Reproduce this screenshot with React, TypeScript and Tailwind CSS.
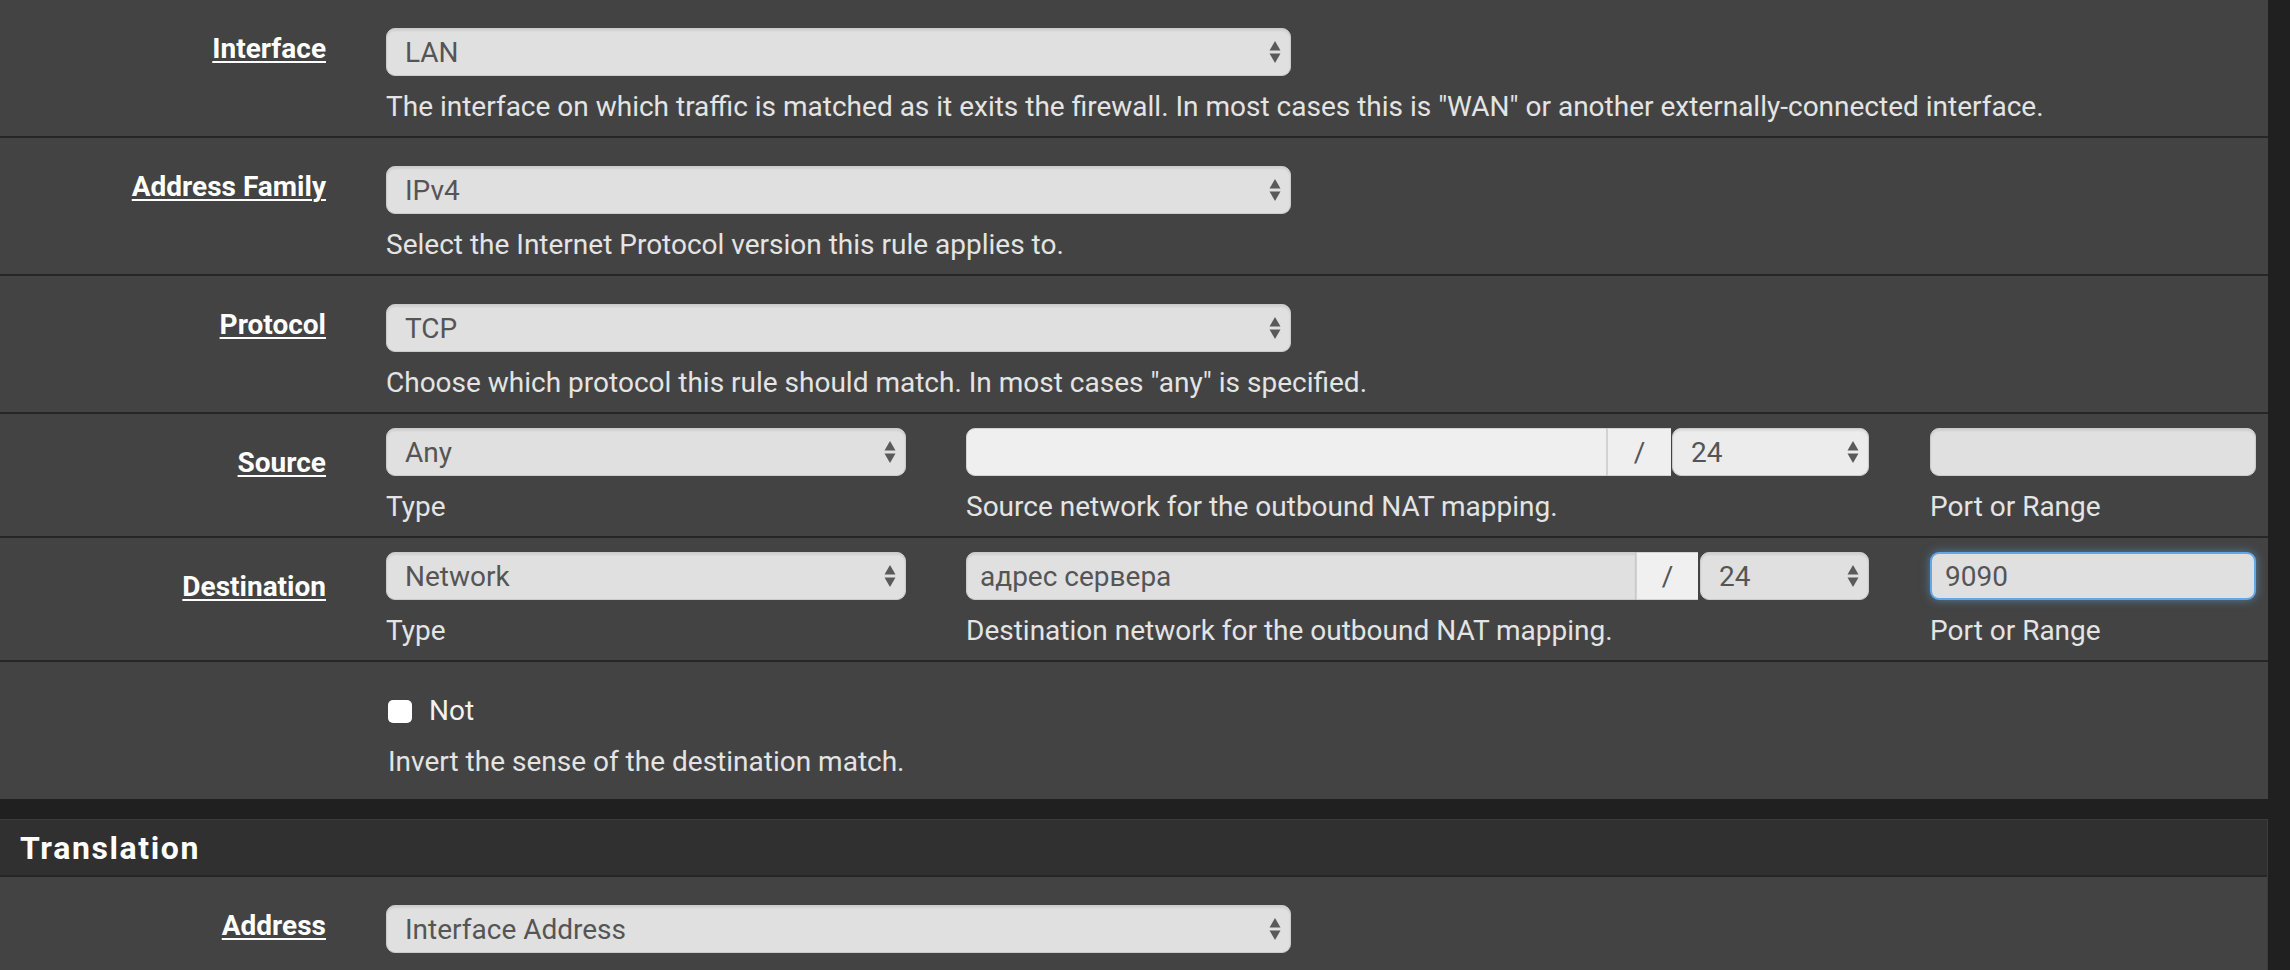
import React from "react";

function Arrows() {
  return (
    <svg width="12" height="24" viewBox="0 0 12 24" className="shrink-0">
      <path d="M6 1 L11.5 10.5 L0.5 10.5 Z" fill="#5a5a5a" />
      <path d="M0.5 13.5 L11.5 13.5 L6 23 Z" fill="#5a5a5a" />
    </svg>
  );
}

function Select({ value, className = "" }: { value: string; className?: string }) {
  return (
    <div
      className={`flex h-[48px] items-center justify-between rounded-[9px] border border-[#cbcbcb] pl-[18px] pr-[9px] text-[#555] shadow-[inset_0_2px_2px_rgba(0,0,0,0.07)] ${className}`}
    >
      <span className="pt-[2px]">{value}</span>
      <Arrows />
    </div>
  );
}

function Help({ children, className = "" }: { children: React.ReactNode; className?: string }) {
  return <div className={`mt-[11px] text-[#e4e4e4] ${className}`}>{children}</div>;
}

function Row({
  label,
  top = 28,
  border = true,
  children,
}: {
  label?: string;
  top?: 28 | 14;
  border?: boolean;
  children: React.ReactNode;
}) {
  return (
    <div className={`flex pb-[9px] ${border ? "border-b-2 border-[#262626]" : ""}`}>
      <div className="w-[326px] shrink-0 pt-[29px] text-right font-bold text-white">
        {label && <span className="underline decoration-2 underline-offset-[3px]">{label}</span>}
      </div>
      <div className={`ml-[60px] flex-1 ${top === 28 ? "pt-[28px]" : "pt-[14px]"}`}>{children}</div>
    </div>
  );
}

export default function App() {
  return (
    <div className="min-h-screen w-full bg-[#202020] font-['Roboto','Liberation_Sans',sans-serif] text-[28px] leading-[40px]">
      <div className="w-[2268px]">
        <section className="bg-[#434343]">
          <Row label="Interface">
            <Select value="LAN" className="w-[905px] bg-[#e0e0e0]" />
            <Help>
              The interface on which traffic is matched as it exits the firewall. In most cases this is "WAN" or
              another externally-connected interface.
            </Help>
          </Row>
          <Row label="Address Family">
            <Select value="IPv4" className="w-[905px] bg-[#e0e0e0]" />
            <Help>Select the Internet Protocol version this rule applies to.</Help>
          </Row>
          <Row label="Protocol">
            <Select value="TCP" className="w-[905px] bg-[#e0e0e0]" />
            <Help>Choose which protocol this rule should match. In most cases "any" is specified.</Help>
          </Row>

          <Row label="Source" top={14}>
            <div className="flex">
              <div className="w-[520px]">
                <Select value="Any" className="w-full bg-[#e0e0e0]" />
                <Help>Type</Help>
              </div>
              <div className="ml-[60px] w-[903px]">
                <div className="flex h-[48px]">
                  <div className="flex-1 rounded-l-[9px] border border-[#d2d2d2] bg-[#efefef]" />
                  <div className="flex w-[64px] items-center justify-center border-y border-l border-[#d2d2d2] bg-[#efefef] pt-[2px] text-[#555]">
                    /
                  </div>
                  <Select value="24" className="ml-px w-[197px] bg-[#ececec] pl-[16px]" />
                </div>
                <Help>Source network for the outbound NAT mapping.</Help>
              </div>
              <div className="ml-[61px] w-[326px]">
                <div className="h-[48px] rounded-[9px] border border-[#cbcbcb] bg-[#e0e0e0] shadow-[inset_0_2px_2px_rgba(0,0,0,0.07)]" />
                <Help>Port or Range</Help>
              </div>
            </div>
          </Row>

          <Row label="Destination" top={14}>
            <div className="flex">
              <div className="w-[520px]">
                <Select value="Network" className="w-full bg-[#e0e0e0]" />
                <Help>Type</Help>
              </div>
              <div className="ml-[60px] w-[903px]">
                <div className="flex h-[48px]">
                  <div className="flex flex-1 items-center rounded-l-[9px] border border-[#cbcbcb] bg-[#e0e0e0] pl-[13px] pt-[2px] text-[#555] shadow-[inset_0_2px_2px_rgba(0,0,0,0.07)]">
                    адрес сервера
                  </div>
                  <div className="flex w-[62px] items-center justify-center border-y border-l border-[#d2d2d2] bg-[#f0f0f0] pt-[2px] text-[#555]">
                    /
                  </div>
                  <Select value="24" className="ml-[2px] w-[169px] bg-[#e0e0e0] pl-[16px]" />
                </div>
                <Help>Destination network for the outbound NAT mapping.</Help>
              </div>
              <div className="ml-[61px] w-[326px]">
                <div className="flex h-[48px] items-center rounded-[9px] border-2 border-[#62a8e6] bg-[#e0e0e0] pl-[13px] pt-[2px] text-[#555] shadow-[0_0_10px_rgba(102,175,233,0.55)]">
                  9090
                </div>
                <Help>Port or Range</Help>
              </div>
            </div>
          </Row>

          <div className="flex pb-[17px]">
            <div className="w-[326px] shrink-0" />
            <div className="ml-[60px] flex-1 pt-[29px]">
              <div className="flex items-center pl-[2px]">
                <div className="h-[23px] w-[24px] rounded-[5px] bg-white" />
                <span className="ml-[17px] text-[#f2f2f2]">Not</span>
              </div>
              <Help className="pl-[2px]">Invert the sense of the destination match.</Help>
            </div>
          </div>
        </section>

        <div className="h-[20px]" />

        <section className="border-t border-r border-[#3c3c3c] bg-[#434343]">
          <div className="flex h-[57px] items-center border-b-2 border-[#262626] bg-[#303030] pl-[20px]">
            <h2 className="pt-[1px] text-[32px] font-bold tracking-[1.6px] text-white">Translation</h2>
          </div>
          <Row label="Address" border={false}>
            <Select value="Interface Address" className="w-[905px] bg-[#e0e0e0]" />
            <Help>&nbsp;</Help>
          </Row>
        </section>
      </div>
    </div>
  );
}
